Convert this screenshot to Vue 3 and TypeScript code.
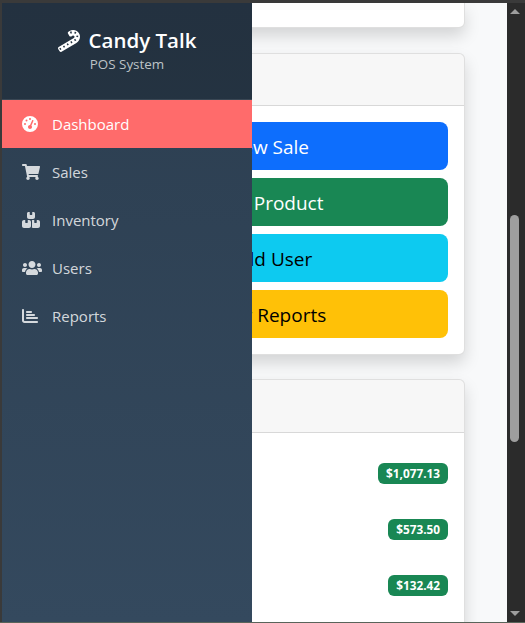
<script setup lang="ts">
interface NavItem {
  label: string
  viewBox: string
  path: string
}

const navItems: NavItem[] = [
  {
    label: 'Dashboard',
    viewBox: '0 0 512 512',
    path: 'M0 256a256 256 0 1 1 512 0A256 256 0 1 1 0 256zM288 96a32 32 0 1 0 -64 0 32 32 0 1 0 64 0zM256 416c35.3 0 64-28.7 64-64c0-17.4-6.9-33.1-18.1-44.6L366 161.7c5.3-12.1-.2-26.3-12.3-31.6s-26.3 .2-31.6 12.3L257.9 288c-.6 0-1.3 0-1.9 0c-35.3 0-64 28.7-64 64s28.7 64 64 64zM176 144a32 32 0 1 0 -64 0 32 32 0 1 0 64 0zM96 288a32 32 0 1 0 0-64 32 32 0 1 0 0 64zm352-32a32 32 0 1 0 -64 0 32 32 0 1 0 64 0z'
  },
  {
    label: 'Sales',
    viewBox: '0 0 576 512',
    path: 'M528.12 301.319l47.273-208C578.806 78.301 567.391 64 551.99 64H159.208l-9.166-44.81C147.758 8.021 137.93 0 126.529 0H24C10.745 0 0 10.745 0 24v16c0 13.255 10.745 24 24 24h69.883l70.248 343.435C147.325 417.1 136 435.222 136 456c0 30.928 25.072 56 56 56s56-25.072 56-56c0-15.674-6.447-29.835-16.824-40h209.647C430.447 426.165 424 440.326 424 456c0 30.928 25.072 56 56 56s56-25.072 56-56c0-22.172-12.888-41.332-31.579-50.405l5.517-24.276c3.413-15.018-8.002-29.319-23.403-29.319H218.117l-6.545-32h293.145c11.206 0 20.92-7.754 23.403-18.681z'
  },
  {
    label: 'Inventory',
    viewBox: '0 0 576 512',
    path: 'M248 0H208c-26.5 0-48 21.5-48 48V160c0 35.3 28.7 64 64 64H352c35.3 0 64-28.7 64-64V48c0-26.5-21.5-48-48-48H328V80c0 8.8-7.2 16-16 16H264c-8.8 0-16-7.2-16-16V0zM64 256c-35.3 0-64 28.7-64 64V448c0 35.3 28.7 64 64 64H224c35.3 0 64-28.7 64-64V320c0-35.3-28.7-64-64-64H184v80c0 8.8-7.2 16-16 16H120c-8.8 0-16-7.2-16-16V256H64zM352 512H512c35.3 0 64-28.7 64-64V320c0-35.3-28.7-64-64-64H472v80c0 8.8-7.2 16-16 16H408c-8.8 0-16-7.2-16-16V256H352c-15 0-28.8 5.1-39.7 13.8c4.9 10.4 7.7 22 7.7 34.2V464c0 12.2-2.8 23.8-7.7 34.2C323.2 506.9 337 512 352 512z'
  },
  {
    label: 'Users',
    viewBox: '0 0 640 512',
    path: 'M96 224c35.3 0 64-28.7 64-64s-28.7-64-64-64-64 28.7-64 64 28.7 64 64 64zm448 0c35.3 0 64-28.7 64-64s-28.7-64-64-64-64 28.7-64 64 28.7 64 64 64zm32 32h-64c-17.6 0-33.5 7.1-45.1 18.6 40.3 22.1 68.9 62 75.1 109.4h66c17.7 0 32-14.3 32-32v-32c0-35.3-28.7-64-64-64zm-256 0c61.9 0 112-50.1 112-112S381.9 32 320 32 208 82.1 208 144s50.1 112 112 112zm76.8 32h-8.3c-20.8 10-43.9 16-68.5 16s-47.6-6-68.5-16h-8.3C179.6 288 128 339.6 128 403.2V432c0 26.5 21.5 48 48 48h288c26.5 0 48-21.5 48-48v-28.8c0-63.6-51.6-115.2-115.2-115.2zm-223.7-13.4C161.5 263.1 145.6 256 128 256H64c-35.3 0-64 28.7-64 64v32c0 17.7 14.3 32 32 32h65.9c6.3-47.4 34.9-87.3 75.2-109.4z'
  },
  {
    label: 'Reports',
    viewBox: '0 0 512 512',
    path: 'M32 32c17.7 0 32 14.3 32 32V400c0 8.8 7.2 16 16 16H480c17.7 0 32 14.3 32 32s-14.3 32-32 32H80c-44.2 0-80-35.8-80-80V64C0 46.3 14.3 32 32 32zM128 128c0-17.7 14.3-32 32-32H288c17.7 0 32 14.3 32 32s-14.3 32-32 32H160c-17.7 0-32-14.3-32-32zm32 64H384c17.7 0 32 14.3 32 32s-14.3 32-32 32H160c-17.7 0-32-14.3-32-32s14.3-32 32-32zm0 96H480c17.7 0 32 14.3 32 32s-14.3 32-32 32H160c-17.7 0-32-14.3-32-32s14.3-32 32-32z'
  }
]

const actions = [
  { label: 'New Sale', tone: 'primary' },
  { label: 'Add Product', tone: 'success' },
  { label: 'Add User', tone: 'info' },
  { label: 'View Reports', tone: 'warning' }
]

const totals = ['$1,077.13', '$573.50', '$132.42']

const canePath =
  'M497.5 92C469.6 33.1 411.8 0 352.4 0c-27.9 0-56.2 7.3-81.8 22.6L243.1 39c-15.2 9.1-20.1 28.7-11 43.9l32.8 54.9c6 10 16.6 15.6 27.5 15.6 5.6 0 11.2-1.5 16.4-4.5l27.5-16.4c5.1-3.1 10.8-4.5 16.4-4.5 10.9 0 21.5 5.6 27.5 15.6 9.1 15.1 4.1 34.8-11 43.9L15.6 397.6c-15.2 9.1-20.1 28.7-11 43.9l32.8 54.9c6 10 16.6 15.6 27.5 15.6 5.6 0 11.2-1.5 16.4-4.5L428.6 301c71.7-42.9 104.6-133.5 68.9-209z'
const caneCenter = 'M40 447 L385 240 C470 190 470 90 380 55 C340 40 300 55 270 75'
</script>

<template>
  <div class="window">
    <div class="viewport">
      <main class="main">
        <section class="card card-cut"></section>

        <section class="card">
          <div class="card-header"></div>
          <div class="card-body actions">
            <button v-for="action in actions" :key="action.label" class="btn" :class="action.tone">
              {{ action.label }}
            </button>
          </div>
        </section>

        <section class="card">
          <div class="card-header tall"></div>
          <div class="rows">
            <div v-for="total in totals" :key="total" class="row">
              <span class="badge">{{ total }}</span>
            </div>
          </div>
        </section>
      </main>

      <aside class="sidebar">
        <div class="brand">
          <h4 class="brand-title">
            <svg class="cane" viewBox="0 0 512 512" aria-hidden="true">
              <path :d="canePath" fill="#fff" />
              <path class="cane-stripes" :d="caneCenter" />
            </svg>
            <span>Candy Talk</span>
          </h4>
          <div class="brand-sub">POS System</div>
        </div>
        <nav class="nav">
          <a v-for="(item, i) in navItems" :key="item.label" class="nav-link" :class="{ active: i === 0 }">
            <svg class="nav-icon" :viewBox="item.viewBox" preserveAspectRatio="xMinYMid meet" aria-hidden="true">
              <path :d="item.path" fill="currentColor" />
            </svg>
            <span>{{ item.label }}</span>
          </a>
        </nav>
      </aside>
    </div>

    <div class="scrollbar">
      <span class="arrow up"></span>
      <div class="track"><div class="thumb"></div></div>
      <span class="arrow down"></span>
    </div>
  </div>
</template>

<style>
html,
body {
  margin: 0;
  background: #2b2b2b;
}
</style>

<style scoped>
.window {
  box-sizing: border-box;
  width: 525px;
  height: 623px;
  padding: 3px 0 0 2px;
  display: flex;
  background: #3a3a3a;
  border-bottom: 1px solid #59645a;
  font-family: "Open Sans", "Noto Sans", sans-serif;
  overflow: hidden;
}

.viewport {
  position: relative;
  flex: 1;
  min-width: 0;
  background: #f8f9fa;
  overflow: hidden;
}

.main {
  padding-left: 70px;
  padding-right: 42px;
  display: flex;
  flex-direction: column;
  gap: 24px;
}

.card {
  flex: none;
  background: #fff;
  border: 1px solid rgba(0, 0, 0, 0.125);
  border-radius: 6px;
  box-shadow: 0 8px 16px rgba(0, 0, 0, 0.15);
}

.card-cut {
  height: 25px;
  margin-bottom: 1px;
  border-top: 0;
  border-radius: 0 0 6px 6px;
  box-sizing: border-box;
}

.card-header {
  height: 51px;
  background: rgba(0, 0, 0, 0.03);
  border-bottom: 1px solid rgba(0, 0, 0, 0.125);
  border-radius: 5px 5px 0 0;
}

.card-header.tall {
  height: 52px;
}

.card-body {
  padding: 16px;
}

.actions {
  display: flex;
  flex-direction: column;
  gap: 8px;
}

.btn {
  height: 48px;
  padding: 1px 0 0;
  border: 0;
  border-radius: 8px;
  font-family: inherit;
  font-size: 19px;
  color: #fff;
}

.primary { background: #0d6efd; }
.success { background: #198754; }
.info { background: #0dcaf0; color: #000; padding-left: 6px; }
.warning { background: #ffc107; color: #000; }

.rows {
  padding: 12px 16px 60px;
}

.row {
  height: 56px;
  display: flex;
  align-items: center;
  justify-content: flex-end;
}

.badge {
  padding: 0 8px;
  height: 21px;
  line-height: 21px;
  background: #198754;
  color: #fff;
  border-radius: 6px;
  font-size: 11.8px;
  font-weight: 700;
}

.sidebar {
  position: absolute;
  top: 0;
  left: 0;
  bottom: 0;
  width: 250px;
  background: linear-gradient(180deg, #2c3e50, #34495e);
  color: #ecf0f1;
}

.brand {
  height: 97px;
  box-sizing: border-box;
  padding-top: 23px;
  text-align: center;
  background: rgba(0, 0, 0, 0.2);
  border-bottom: 1px solid rgba(255, 255, 255, 0.1);
}

.brand-title {
  margin: 0 0 1px;
  display: flex;
  align-items: center;
  justify-content: center;
  gap: 9px;
  font-size: 20.5px;
  line-height: 29px;
  font-weight: 600;
  color: #fff;
}

.cane {
  width: 22px;
  height: 22px;
  flex: none;
}

.cane-stripes {
  fill: none;
  stroke: #243342;
  stroke-width: 44;
  stroke-dasharray: 34 66;
}

.brand-sub {
  font-size: 13.4px;
  line-height: 17px;
  color: #bdc3c7;
}

.nav-link {
  height: 48px;
  display: flex;
  align-items: center;
  gap: 10px;
  padding-left: 20px;
  font-size: 15px;
  color: rgba(255, 255, 255, 0.8);
}

.nav-link.active {
  background: #ff6b6b;
  color: #fff;
}

.nav-icon {
  width: 20px;
  height: 16px;
  flex: none;
}

.scrollbar {
  flex: none;
  box-sizing: border-box;
  width: 18px;
  padding-right: 3px;
  display: flex;
  flex-direction: column;
  align-items: center;
  background: #2b2b2b;
}

.track {
  flex: 1;
  width: 100%;
  padding-top: 195px;
  box-sizing: border-box;
}

.thumb {
  width: 9px;
  height: 227px;
  margin: 0 auto;
  background: #9e9e9e;
  border-radius: 5px;
}

.arrow {
  flex: none;
  width: 0;
  height: 0;
  margin: 6px 0;
  border-left: 5px solid transparent;
  border-right: 5px solid transparent;
}

.arrow.up {
  border-bottom: 5px solid #9e9e9e;
}

.arrow.down {
  border-top: 5px solid #9e9e9e;
}
</style>
